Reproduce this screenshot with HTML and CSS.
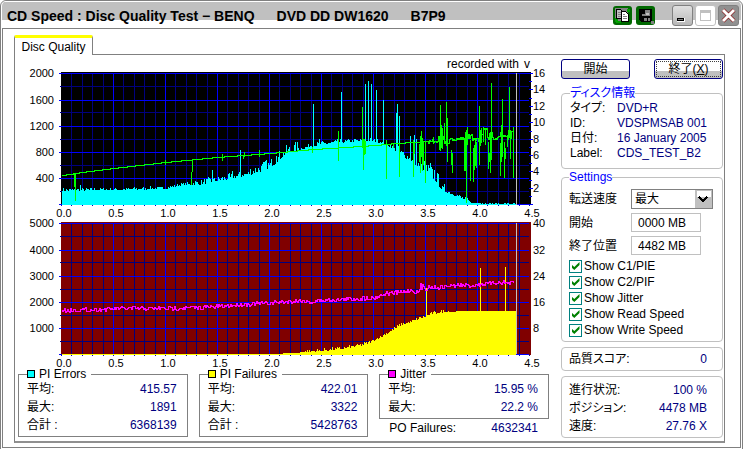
FILE: index.html
```html
<!DOCTYPE html>
<html lang="ja">
<head>
<meta charset="utf-8">
<title>CD Speed : Disc Quality Test</title>
<link rel="stylesheet" href="styles.css">
</head>
<body>
<div class="window">
  <header class="titlebar">
    <h1 class="title"><span>CD Speed : Disc Quality Test − BENQ</span><span>DVD DD DW1620</span><span>B7P9</span></h1>
    <div class="tools">
      <button class="tool" type="button" aria-label="Copy">
        <svg width="19" height="19" viewBox="0 0 19 19" shape-rendering="crispEdges">
          <path fill="#808080" d="M2 2h13v14H2z"/><path fill="#00a000" d="M2 12h3v4H2zM14 3h3v3h-3zM3 15h5v2H3z"/>
          <path fill="#c0c0c0" stroke="#000" d="M3.500 3.500h4l2 2v7h-6z"/>
          <path fill="#fff" stroke="#000" d="M8.500 5.500h4l3 3v7h-7z"/>
          <path stroke="#808080" d="M5 6.500h3M5 8.500h3M5 10.500h3M10 8.500h2M10 10.500h4M10 12.500h4"/>
        </svg>
      </button>
      <button class="tool" type="button" aria-label="Save">
        <svg width="19" height="19" viewBox="0 0 19 19" shape-rendering="crispEdges">
          <path fill="#006800" d="M1 1h16v16H1z"/><path fill="#000" d="M3 3h13v13H5l-2-2z"/>
          <path fill="#808080" d="M9 4h5v6H9zM6 8h3v2H6zM8 12h6v3H8zM15 15h3v3h-3z"/>
          <path fill="#000" d="M11 12h1v3h-1z"/><path fill="#c0c0c0" d="M10 7h3v2h-3z"/>
        </svg>
      </button>
    </div>
    <div class="controls">
      <button class="control" type="button" aria-label="Minimize">
        <svg width="19" height="19" viewBox="0 0 19 19" shape-rendering="crispEdges"><path fill="#fff" d="M4 12h8v4H4z"/><path fill="#000" d="M4 12h7v3H4z"/><path fill="#808080" d="M5 13h5v1H5z"/></svg>
      </button>
      <button class="control control-max" type="button" aria-label="Maximize">
        <svg width="19" height="19" viewBox="0 0 19 19" shape-rendering="crispEdges"><path fill="#fff" stroke="#c0c0c0" d="M4.500 4.500h10v10h-10z"/><path fill="#c0c0c0" d="M4 4h11v3H4z"/></svg>
      </button>
      <button class="control control-close" type="button" aria-label="Close">
        <svg width="19" height="19" viewBox="0 0 19 19"><path stroke="#800000" stroke-width="4" d="M4 4l11 11M15 4L4 15"/><path stroke="#fff" stroke-width="3" d="M4 4l11 11M15 4L4 15"/></svg>
      </button>
    </div>
  </header>

  <main class="client">
    <div class="tabs" role="tablist"><button class="tab" type="button" role="tab" aria-selected="true">Disc Quality</button></div>
    <section class="page">
      <div class="results">
        <svg class="chart" id="errors-chart" viewBox="18 56 531 163" role="img" aria-label="PI Errors"></svg>
        <svg class="chart" id="failures-chart" viewBox="18 219 531 149" role="img" aria-label="PI Failures"></svg>
        <div class="stats">
          <fieldset class="stat">
            <legend><i class="swatch cyan"></i>PI Errors</legend>
            <dl class="rows">
              <div><dt>平均:</dt><dd>415.57</dd></div>
              <div><dt>最大:</dt><dd>1891</dd></div>
              <div><dt>合計 :</dt><dd>6368139</dd></div>
            </dl>
          </fieldset>
          <fieldset class="stat">
            <legend><i class="swatch yellow"></i>PI Failures</legend>
            <dl class="rows">
              <div><dt>平均:</dt><dd>422.01</dd></div>
              <div><dt>最大:</dt><dd>3322</dd></div>
              <div><dt>合計 :</dt><dd>5428763</dd></div>
            </dl>
          </fieldset>
          <div class="stat-stack">
            <fieldset class="stat">
              <legend><i class="swatch magenta"></i>Jitter</legend>
              <dl class="rows">
                <div><dt>平均:</dt><dd>15.95 %</dd></div>
                <div><dt>最大:</dt><dd>22.2 %</dd></div>
              </dl>
            </fieldset>
            <dl class="rows po">
              <div><dt>PO Failures:</dt><dd>4632341</dd></div>
            </dl>
          </div>
        </div>
      </div>

      <aside class="side">
        <div class="actions">
          <button class="push" type="button">開始</button>
          <button class="push push-focus" type="button">終了(<u>X</u>)</button>
        </div>
        <fieldset class="group">
          <legend>ディスク情報</legend>
          <dl class="info">
            <dt>タイプ:</dt><dd>DVD+R</dd>
            <dt>ID:</dt><dd>VDSPMSAB 001</dd>
            <dt>日付:</dt><dd>16 January 2005</dd>
            <dt>Label:</dt><dd>CDS_TEST_B2</dd>
          </dl>
        </fieldset>
        <fieldset class="group settings">
          <legend>Settings</legend>
          <div class="form">
            <label for="speed">転送速度</label>
            <div class="select"><select id="speed"><option>最大</option></select><svg width="17" height="18" viewBox="0 0 17 18" shape-rendering="crispEdges"><path fill="#c0c0c0" d="M0 0h17v18H0z"/><path fill="#fff" d="M2 1h14v6H2z"/><path fill="none" stroke="#000" stroke-width="2" d="M4 7l4 4 4-4"/></svg></div>
            <label for="start">開始</label><input id="start" type="text" value="0000 MB">
            <label for="end">終了位置</label><input id="end" type="text" value="4482 MB">
          </div>
          <div class="checks">
            <label><input type="checkbox" checked>Show C1/PIE</label>
            <label><input type="checkbox" checked>Show C2/PIF</label>
            <label><input type="checkbox" checked>Show Jitter</label>
            <label><input type="checkbox" checked>Show Read Speed</label>
            <label><input type="checkbox" checked>Show Write Speed</label>
          </div>
        </fieldset>
        <dl class="box rows">
          <div><dt>品質スコア:</dt><dd>0</dd></div>
        </dl>
        <dl class="box rows progress">
          <div><dt>進行状況:</dt><dd>100 %</dd></div>
          <div><dt>ポジション:</dt><dd>4478 MB</dd></div>
          <div><dt>速度:</dt><dd>27.76 X</dd></div>
        </dl>
      </aside>
    </section>
  </main>
</div>
<script src="charts.js"></script>
</body>
</html>
```
FILE: styles.css
```css
* { box-sizing: border-box; }

body {
  margin: 0;
  background: #fff;
  color: #000;
  font: 12px/16px "Liberation Sans", "Noto Sans CJK JP", sans-serif;
  font-feature-settings: "palt";
}

button, input, select { font: inherit; color: inherit; }
fieldset, legend, dl, dd, h1 { margin: 0; padding: 0; min-width: 0; }

.window {
  display: flex;
  flex-direction: column;
  min-height: 100vh;
  padding: 0 1px 1px;
  border: 1px solid #808080;
  border-radius: 6px 6px 0 0;
}

/* Title bar */
.titlebar {
  display: flex;
  align-items: center;
  height: 27px;
  padding: 2px 2px 0 5px;
  background: linear-gradient(#fff 1px, #c0c0c0 1px, #c0c0c0 19px, #fff 19px);
  border-radius: 5px 5px 0 0;
}
.title { display: flex; gap: 22px; flex: 1; font-size: 14px; font-weight: bold; white-space: nowrap; }
.tools { display: flex; gap: 4px; margin-right: 17px; }
.controls { display: flex; gap: 2px; }
.tool, .control { display: grid; place-items: center; padding: 0; }
.tool { width: 19px; height: 19px; border: 0; border-radius: 3px; background: #006800; overflow: hidden; }
.tool svg, .control svg { display: block; }
.control { width: 21px; height: 21px; border: 1px solid #808080; border-radius: 3px; background: linear-gradient(#e0e0e0, #b8b8b8); }
.control-max { border-color: #c0c0c0; background: #fff; }
.control-close { border-color: #808080; background: #909090; }

/* Client area */
.client { flex: 1; display: flex; flex-direction: column; padding: 6px 15px 4px 11px; border: 1px solid #808080; }
.tabs { display: flex; height: 19px; }
.tab {
  height: 20px;
  width: 79px;
  padding: 0;
  border: 1px solid #808080;
  border-top: 3px solid #ff0;
  border-bottom: 0;
  border-radius: 2px 2px 0 0;
  background: #fff;
  line-height: 14px;
  z-index: 1;
}
.page {
  flex: 1;
  display: flex;
  gap: 12px;
  padding: 1px 1px 3px 3px;
  border: 1px solid #808080;
  border-bottom: 2px solid #909090;
}
.results { flex: 1; min-width: 0; }
.chart { display: block; width: 100%; height: auto; font-size: 12px; }

/* Statistics */
.stats { display: grid; grid-template-columns: repeat(3, 1fr); gap: 11px; }
.stat { padding: 0 10px 2px 8px; border: 1px solid #808080; }
.stat legend { display: flex; align-items: center; gap: 4px; height: 12px; padding-right: 5px; line-height: 12px; }
.swatch { width: 8px; height: 8px; border: 1px solid #000; }
.cyan { background: #0ff; }
.yellow { background: #ff0; }
.magenta { background: #f0f; }
.rows { display: grid; }
.rows div { display: flex; justify-content: space-between; line-height: 18px; }
.rows dd, .info dd { color: #000080; }
.stat-stack { display: flex; flex-direction: column; }
.po { padding: 0 11px 0 10px; }

/* Side column */
.side { display: flex; flex-direction: column; width: 162px; padding-top: 3px; }
.actions { display: flex; justify-content: space-between; margin-bottom: 6px; }
.push {
  width: 69px;
  height: 20px;
  padding: 0;
  border: 1px solid #000080;
  border-radius: 3px;
  background: linear-gradient(#fff 11px, #c0c0c0 11px);
  line-height: 16px;
}
.push-focus { outline: 1px dotted #404040; outline-offset: -3px; }
.group { padding: 0 8px; border: 1px solid #c0c0c0; border-radius: 4px; }
.group legend { height: 16px; color: #00f; }
.info { display: grid; grid-template-columns: 47px 1fr; line-height: 15px; padding: 0 0 7px; white-space: nowrap; }
.settings { padding: 0 7px 4px; }
.form { display: grid; grid-template-columns: 62px 1fr; align-items: center; row-gap: 4px; padding-top: 4px; }
.form input { width: 70px; height: 19px; padding: 0 6px; border: 1px solid #c0c0c0; }
.select { display: flex; align-items: center; width: 82px; height: 20px; border: 1px solid #808080; }
.select select { flex: 1; min-width: 0; height: 18px; padding: 0 3px; border: 0; background: #fff; appearance: none; }
.checks { display: flex; flex-direction: column; justify-content: space-between; height: 82px; padding-top: 3px; }
.checks label { display: flex; align-items: center; gap: 2px; line-height: 16px; }
.checks input {
  appearance: none;
  width: 13px;
  height: 13px;
  margin: 0;
  border: 1px solid #008080;
  background: #fff;
  display: grid;
  place-items: center;
}
.checks input:checked::before {
  content: "";
  width: 8px;
  height: 8px;
  background: #008000;
  clip-path: polygon(0 30%, 35% 62%, 100% 0, 100% 38%, 35% 100%, 0 68%);
}
.box { margin-top: 5px; padding: 2px 15px 2px 7px; border: 1px solid #c0c0c0; border-radius: 4px; }
.progress { padding: 4px 15px 2px 7px; }
```
FILE: charts.js
```javascript
const NS = 'http://www.w3.org/2000/svg';
const LEFT = 61, STEP = 52;

let seed = 7;
function noise() {
  seed = (seed * 16807) % 2147483647;
  return seed / 2147483647;
}

function add(svg, name, attrs, text) {
  const el = document.createElementNS(NS, name);
  for (const key in attrs) el.setAttribute(key, attrs[key]);
  if (text) el.textContent = text;
  svg.appendChild(el);
}

function rect(svg, x, y, w, h, fill) {
  add(svg, 'rect', { x, y, width: w, height: h, fill, 'shape-rendering': 'crispEdges' });
}

function level(points, x) {
  let i = 1;
  while (i < points.length - 1 && points[i][0] < x) i++;
  const [x0, y0] = points[i - 1], [x1, y1] = points[i];
  return y0 + (y1 - y0) * (x - x0) / (x1 - x0);
}

function grid(svg, top, fill, labels) {
  const bottom = top + 131;
  rect(svg, LEFT, top - 1, 470, 133, fill);
  for (let i = 0; i <= 45; i++) {
    const x = LEFT + Math.round(i * STEP / 5);
    if (i % 5 && i) rect(svg, x, top, 1, 131, '#000080');
    rect(svg, x, bottom + 1, 1, 1, '#0000c0');
  }
  for (let i = 1; i < 10; i += 2) rect(svg, LEFT - 1, top + Math.round(i * 13.1), 469, 1, '#000080');
  for (let i = 1; i < 9; i++) rect(svg, LEFT + i * STEP, top, 1, 131, '#0000ff');
  for (let i = 0; i <= 5; i++) {
    const y = i === 0 ? top : top + 1 + i * 26;
    rect(svg, LEFT - 2, y, 470, 1, '#0000ff');
    if (labels[i]) add(svg, 'text', { x: 54, y: y + 4, 'text-anchor': 'end', 'font-size': 11 }, labels[i]);
  }
  for (let i = 0; i <= 9; i++) {
    add(svg, 'text', { x: LEFT + 3 + i * STEP, y: bottom + 13, 'text-anchor': 'middle', 'font-size': 11 }, (i / 2).toFixed(1));
  }
}

function area(svg, points, from, to, bottom, rough, fill, spikes) {
  let d = '';
  for (let x = from; x < to; x++) {
    const y = Math.min(bottom - 1, Math.round(level(points, x) - Math.pow(noise(), 2) * rough(x)));
    d += `M${x} ${bottom}V${y}h1V${bottom}z`;
  }
  for (const [x, y] of spikes) d += `M${x} ${bottom}V${y}h1V${bottom}z`;
  add(svg, 'path', { d, fill, 'shape-rendering': 'crispEdges' });
}

function trace(svg, points, from, to, rough, fill, spikes) {
  let d = '', last = Math.round(level(points, from));
  for (let x = from; x < to; x++) {
    const y = Math.round(level(points, x) + (noise() - 0.5) * rough(x));
    d += `M${x} ${Math.min(y, last)}h1V${Math.max(y, last) + 1}h-1z`;
    last = y;
  }
  for (const [x, y0, y1] of spikes) d += `M${x} ${y0}h1V${y1}h-1z`;
  add(svg, 'path', { d, fill, 'shape-rendering': 'crispEdges' });
}

const errors = document.getElementById('errors-chart');
grid(errors, 73, '#000', ['2000', '1600', '1200', '800', '400', '']);
area(errors,
  [[62,191],[130,190],[165,189],[175,187],[185,185],[200,185],[210,183],[220,181],[230,179],[240,177],[250,175],[260,172],[270,168],[275,164],[280,159],[285,155],[290,153],[300,150],[310,147],[320,145],[340,143],[370,141],[380,143],[390,147],[395,151],[400,155],[410,161],[415,165],[420,168],[425,172],[430,176],[435,181],[440,188],[445,192],[450,194],[455,196],[460,198],[465,201],[470,203],[490,204],[516,204]],
  62, 516, 205, x => x < 190 ? 3 : x < 250 ? 6 : x < 300 ? 10 : x < 395 ? 4 : x < 420 ? 8 : x < 440 ? 12 : x < 470 ? 4 : 1, '#0ff',
  [[80,185],[212,170],[232,171],[240,150],[265,161],[276,156],[313,104],[319,139],[341,92],[365,84],[368,81],[371,84],[376,90],[383,100],[396,113],[397,104],[399,116],[410,136],[414,135],[416,139],[430,163],[434,170],[444,184],[449,192]]);
trace(errors,
  [[62,175],[82,172],[113,168],[165,162],[217,157],[270,153],[313,149],[345,147],[375,145],[395,143],[413,142],[430,141],[450,139],[470,138],[478,136],[514,135]],
  62, 514, x => x < 427 ? 0 : x < 438 ? 4 : x < 449 ? 12 : x < 463 ? 3 : x < 470 ? 12 : x < 478 ? 8 : x < 489 ? 16 : 8, '#0f0',
  [[74,174,187],[75,174,201],[165,160,165],[191,172,185],[192,160,172],[222,154,161],[243,155,159],[244,152,157],[259,150,157],[312,147,153],[338,131,161],[362,107,148],[363,139,170],[364,139,155],[365,141,154],[386,140,179],[393,143,148],[399,143,177],[413,140,177],[414,142,154],[419,144,162],[420,136,173],[421,131,157],[422,138,171],[423,142,165],[425,142,183],[433,137,144],[439,138,150],[440,105,151],[441,125,148],[442,128,149],[444,123,144],[446,102,146],[447,118,162],[451,150,165],[452,153,173],[464,138,171],[465,132,171],[466,130,203],[467,127,145],[470,140,181],[473,148,182],[474,145,170],[475,138,166],[476,142,168],[479,106,165],[480,130,146],[481,128,143],[483,127,142],[485,128,145],[488,142,169],[489,153,162],[490,133,173],[491,83,160],[500,143,176],[501,125,162],[502,99,157],[504,142,178],[505,148,159],[507,136,147],[508,130,140],[509,87,136],[510,130,159],[513,127,178]]);
rect(errors, 516, 73, 1, 132, '#c0c0c0');
for (let i = 0; i <= 8; i++) {
  const y = Math.round(204 - i * 16.375);
  rect(errors, 529, y, 4, 1, '#00f');
  if (i < 8) rect(errors, 529, y - 8, 3, 1, '#00f');
  if (i) add(errors, 'text', { x: 533, y: y + 4, 'font-size': 11 }, String(i * 2));
}
add(errors, 'text', { x: 447, y: 68 }, 'recorded with');
add(errors, 'text', { x: 524, y: 68 }, 'v');

const failures = document.getElementById('failures-chart');
grid(failures, 223, '#800000', ['5000', '4000', '3000', '2000', '1000', '']);
area(failures,
  [[62,354],[275,354],[290,353],[310,352],[325,351],[335,350],[345,349],[350,348],[360,346],[370,343],[375,340],[380,338],[385,335],[390,332],[395,329],[400,326],[410,323],[420,319],[430,315],[440,313],[450,312],[460,311],[516,311]],
  62, 516, 355, x => x < 300 ? 0 : x < 450 ? 3 : 0, '#ff0', [[426,288],[480,268],[505,267]]);
trace(failures,
  [[62,310],[100,309],[120,308],[170,308],[200,307],[220,306],[240,304],[260,303],[275,302],[300,300],[310,302],[320,300],[340,299],[360,298],[375,297],[385,293],[400,292],[410,290],[418,292],[420,286],[440,287],[450,285],[470,285],[480,284],[500,282],[514,283]],
  62, 514, x => x > 416 && x < 428 ? 7 : 4, '#f0f', []);
rect(failures, 516, 223, 1, 131, '#c0c0c0');
for (let i = 1; i <= 5; i++) {
  add(failures, 'text', { x: 533, y: 358 - i * 26 - (i === 5 ? 1 : 0), 'font-size': 11 }, String(i * 8));
}
```
